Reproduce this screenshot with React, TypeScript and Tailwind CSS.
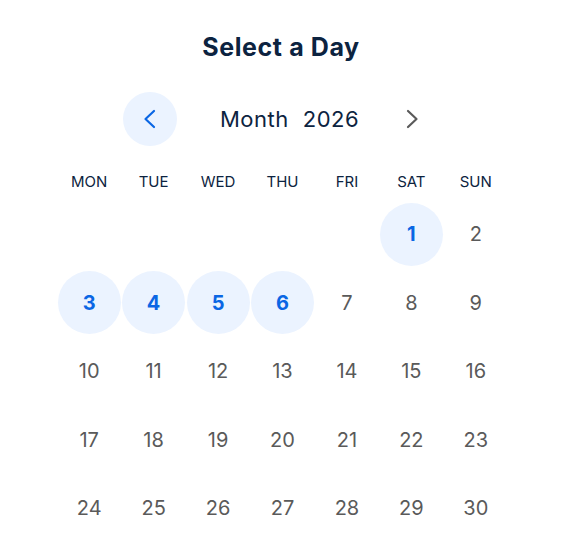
import React from 'react';

const DAY_NAMES = ['MON', 'TUE', 'WED', 'THU', 'FRI', 'SAT', 'SUN'];
const HIGHLIGHTED = [1, 3, 4, 5, 6];
const LEADING_BLANKS = 5;

const ChevronLeft: React.FC<{ className?: string }> = ({ className }) => (
  <svg viewBox="0 0 24 24" width="24" height="24" fill="none" stroke="currentColor" strokeWidth="2.2" strokeLinecap="round" strokeLinejoin="round" className={className}>
    <path d="M16 4l-8.5 8 8.5 8" />
  </svg>
);

const ChevronRight: React.FC<{ className?: string }> = ({ className }) => (
  <svg viewBox="0 0 24 24" width="24" height="24" fill="none" stroke="currentColor" strokeWidth="2.2" strokeLinecap="round" strokeLinejoin="round" className={className}>
    <path d="M8 4l8.5 8-8.5 8" />
  </svg>
);

const App: React.FC = () => {
  const cells: (number | null)[] = [
    ...Array(LEADING_BLANKS).fill(null),
    ...Array.from({ length: 30 }, (_, i) => i + 1),
  ];

  return (
    <div className="w-[562px] h-[556px] bg-white font-['Inter','Liberation_Sans',sans-serif] overflow-hidden">
      <h1 className="pt-[31px] h-[62px] text-center text-[25px] leading-8 font-bold tracking-[0.6px] text-[#0c2340]">
        Select a Day
      </h1>

      <div className="mt-[30px] h-[54px] flex items-center">
        <button className="ml-[123px] w-[54px] h-[54px] rounded-full bg-[#ebf3ff] flex items-center justify-center text-[#0a66e4]">
          <ChevronLeft />
        </button>
        <div className="ml-[43px] text-[22px] tracking-[0.5px] text-[#0c2340] whitespace-nowrap">
          Month<span className="ml-[14px]">2026</span>
        </div>
        <button className="ml-auto mr-[123px] w-[54px] h-[54px] flex items-center justify-center text-[#5a5a5a]">
          <ChevronRight />
        </button>
      </div>

      <div className="ml-[57px] w-[451px] mt-[26px] grid grid-cols-7 h-5 text-[15px] leading-5 text-[#0c2340]">
        {DAY_NAMES.map(d => (
          <div key={d} className="text-center">{d}</div>
        ))}
      </div>

      <div className="ml-[57px] w-[451px] mt-[8px] grid grid-cols-7 auto-rows-[68.5px]">
        {cells.map((day, i) => {
          if (day === null) return <div key={`b${i}`} />;
          const active = HIGHLIGHTED.includes(day);
          return (
            <div key={day} className="flex items-center justify-center">
              <div
                className={
                  active
                    ? 'w-[63px] h-[63px] rounded-full bg-[#ebf3ff] flex items-center justify-center text-[20px] font-bold text-[#0a66e4]'
                    : 'w-[63px] h-[63px] flex items-center justify-center text-[20px] text-[#5a5a5a]'
                }
              >
                {day}
              </div>
            </div>
          );
        })}
      </div>
    </div>
  );
};

export default App;
